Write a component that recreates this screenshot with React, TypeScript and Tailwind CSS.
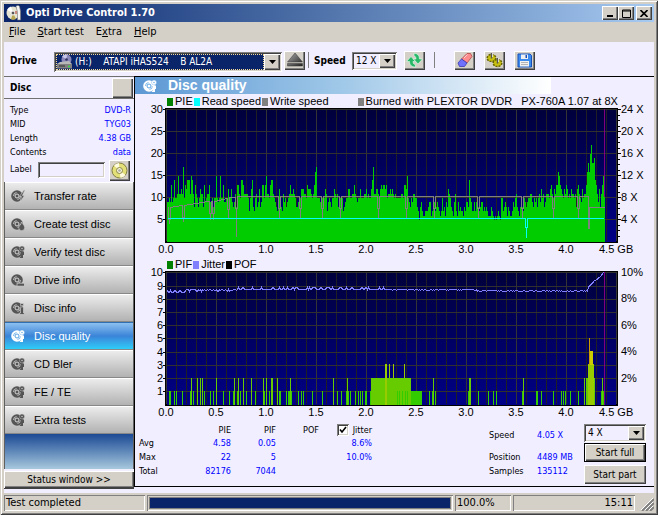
import type { ReactNode } from "react"
import clsx from "clsx"

const RAISED = "bg-[#d4d0c8] shadow-[inset_1px_1px_0_#fff,inset_-1px_-1px_0_#404040,inset_-2px_-2px_0_#808080]"
const SUNKEN = "shadow-[inset_1px_1px_0_#808080,inset_-1px_-1px_0_#fff,inset_2px_2px_0_#404040,inset_-2px_-2px_0_#d4d0c8]"
const PANEL = "shadow-[inset_1px_1px_0_#808080,inset_-1px_-1px_0_#fff]"

// one base-36 digit per column of the PIE scan
const PIE = [
  "99a9d9aeaabfbbcbhadceeebfeb8dba8acbb8d9abbd99a8aaf",
  "a9afaad99a8c8ac989b8ddbaeedbbbba7ace87ab89c89ddadf",
  "bbadeeba987ac987b9a89abdbbcba8898acccbbadcccbabdgh",
  "aaa98a9acb79a98aacbab89aaa789aaccaabbdba9aacaaabbc",
  "abaacehbbccbacdcddcdabbcbcbabaaaaabbaddcfa98a9bbaa",
  "8758976677789967897898767a78698cba8769b76978776879",
  "98ea977979a87899787876668765656765aa789868766798ab",
  "8768987a989aabb98a9a8ab9cab89bbbacdbacbddgfdcbacbd",
  "cabacbbab8cdba9cabbdgigkmiijedb9c8bdff",
].join("")

const PIF: Record<number, number[]> = {
  1: [2, 3, 7, 9, 15, 23, 26, 37, 43, 46, 56, 62, 66, 70, 73, 79, 88, 97, 102, 112, 113, 119, 121, 122, 124, 131, 134, 136, 145, 155, 170, 174, 179, 181, 183, 188, 191, 193, 195, 198, 199, 203, 262, 265, 268, 301, 311, 321, 326, 329, 355, 369, 370, 374, 386, 394, 396, 398, 403, 411, 434, 436],
  2: [24, 30, 33, 35, 49, 67, 71, 76, 84, 96, 99, 104, 105, 110, 123, 166, 180, 266, 302, 303, 356, 417, 419, 420, 427, 435],
  3: [218, 219, 222, 226, 237, 421, 426],
  4: [423, 424, 425],
  5: [422],
}

const PIF_FILL: Record<number, string> = { 1: "#33cc00", 2: "#66cc00", 3: "#99cc00", 4: "#cccc00", 5: "#cc9900" }

const X_LABELS = ["0.0", "0.5", "1.0", "1.5", "2.0", "2.5", "3.0", "3.5", "4.0"]

const WRITE_DIPS = [144, 165, 187, 205, 243, 271, 299, 343, 387, 418, 443]

function dip(x: number, top: number, bottom: number) {
  return ` H${x - 1} V${top + 12} H${x} V${bottom} V${top + 12} H${x + 1} V${top}`
}

function writePath() {
  let d = "M32 99" + dip(34, 99, 115) + " L46 97" + dip(48, 97, 113) + " L73 93" + dip(75, 93, 111)
  d += dip(78, 93, 111) + " L92 90" + dip(93, 89, 109) + dip(101, 88, 128)
  for (const x of WRITE_DIPS) d += dip(x, 88, 109)
  return d + " H453 V120 H454 V99 H469"
}

function jitterPath() {
  const ys = Array.from({ length: 437 }, (_, i) => {
    const n = Math.abs(Math.floor(Math.sin(i * 12.9898) * 43758.5453)) % 5
    if (i < 18) return n > 2 ? 21 : 19
    if (i < 70) return n > 3 ? 20 : n > 1 ? 19 : 18
    if (i < 118) return n === 0 ? 16 : 18
    if (i < 218) return i > 185 && i < 193 ? 18 : n > 2 ? 16 : 18
    if (i < 310) return n > 3 ? 19 : 18
    if (i < 421) return n > 2 ? 20 : 19
    return Math.max(1, Math.round(16 - (i - 420) * 0.95 + (n > 2 ? 1 : 0)))
  })
  return ys.map((y, i) => `${i ? "L" : "M"}${32 + i} ${y}`).join(" ")
}

interface PlotProps {
  id: string
  yLines: number[]
  yLabels: string[]
  right: { y: number; text: string }[]
  children: ReactNode
}

function Plot({ id, yLines, yLabels, right, children }: PlotProps) {
  return (
    <svg viewBox="0 0 519 148" className="block w-full overflow-visible font-['Liberation_Sans',Arial,sans-serif] text-[11px]" shapeRendering="crispEdges">
      <defs>
        <linearGradient id={id} x1="0" y1="0" x2="0" y2="1">
          <stop offset="0" stopColor="#00003c" />
          <stop offset="1" stopColor="#000088" />
        </linearGradient>
      </defs>
      <rect x="30" y="0" width="453" height="135" fill="#000" />
      <rect x="32" y="1" width="449" height="133" fill={`url(#${id})`} />
      {Array.from({ length: 46 }, (_, i) => (
        <rect key={i} x={31 + i * 10} y="1" width="1" height="132" fill={i % 5 ? "#202024" : "#343434"} />
      ))}
      {yLines.map((y) => (
        <g key={y}>
          <rect x="32" y={y} width="449" height="1" fill="#303030" />
          <rect x="28" y={y} width="3" height="1" fill="#000" />
        </g>
      ))}
      {children}
      {yLabels.map((t, i) => (
        <text key={t} x="28" y={yLines[i] + 4} textAnchor="end">{t}</text>
      ))}
      {X_LABELS.map((t, i) => (
        <text key={t} x={31 + i * 50} y="145" textAnchor="middle">{t}</text>
      ))}
      <text x="464" y="145">4.5 GB</text>
      {right.map((r) => (
        <text key={r.text} x="486" y={r.y + 4}>{r.text}</text>
      ))}
    </svg>
  )
}

function PieChart() {
  return (
    <Plot
      id="pie-bg"
      yLines={[1, 23, 45, 67, 89, 111]}
      yLabels={["30", "25", "20", "15", "10", "5"]}
      right={["24 X", "20 X", "16 X", "12 X", "8 X", "4 X"].map((text, i) => ({ text, y: 1 + i * 22 }))}
    >
      {PIE.split("").map((c, i) => {
        const h = Math.round(parseInt(c, 36) * 4.4)
        return <rect key={i} x={32 + i} y={134 - h} width="1" height={h} fill="#00cc00" />
      })}
      {Array.from({ length: 24 }, (_, i) => (
        <rect key={i} x="483" y={Math.round(1 + i * 5.5)} width={i % 4 ? 2 : 3} height="1" fill="#000" />
      ))}
      <g fill="none" transform="translate(.5 .5)">
        <path d={writePath()} stroke="#808080" />
        <path d="M32 110H390V119H391V129V119H392V110H468" stroke="#00ffff" />
      </g>
      <rect x="469" y="1" width="1" height="88" fill="#800080" />
    </Plot>
  )
}

function PifChart() {
  return (
    <Plot
      id="pif-bg"
      yLines={[1, 15, 28, 41, 54, 67, 81, 94, 107, 120]}
      yLabels={["10", "9", "8", "7", "6", "5", "4", "3", "2", "1"]}
      right={["10%", "8%", "6%", "4%", "2%"].map((text, i) => ({ text, y: 1 + Math.round(i * 26.4) }))}
    >
      <rect x="236" y="107" width="40" height="27" fill="#66cc00" />
      <rect x="276" y="120" width="11" height="14" fill="#33cc00" />
      <path d="M262.500 120v14M264.500 120v14M267.500 120v14M270.500 120v14M272.500 120v14" stroke="#33cc00" />
      {Object.entries(PIF).flatMap(([n, cols]) =>
        cols.map((c) => {
          const v = Number(n)
          const h = Math.round(v * 13.2) + 1
          const len = c > 219 && c < 240 ? 14 : h
          return <rect key={`${n}-${c}`} x={32 + c} y={134 - h} width="1" height={len} fill={PIF_FILL[v]} />
        })
      )}
      <rect x="453" y="94" width="6" height="40" fill="#99cc00" />
      <path d={jitterPath()} fill="none" stroke="#8080ff" transform="translate(.5 .5)" />
      <rect x="469" y="1" width="1" height="133" fill="#800080" />
    </Plot>
  )
}

function Legend({ items }: { items: { color: string; text: string; className?: string }[] }) {
  return (
    <div className="flex items-end gap-px pl-[32px] font-['Liberation_Sans',Arial,sans-serif] text-[11px] leading-[13px] whitespace-pre">
      {items.map((it) => (
        <span key={it.text} className={clsx("flex items-center gap-[2px]", it.className)}>
          <svg width="6" height="8"><rect width="6" height="8" fill={it.color} /></svg>
          {it.text}
        </span>
      ))}
    </div>
  )
}

type Mark = "bolt" | "flame" | "discs" | "drive" | "info"

function DiscIcon({ mark, color = "#555" }: { mark: Mark; color?: string }) {
  const hole = color === "#555" ? "#d8d8d8" : "#5aa4e4"
  return (
    <svg width="14" height="14" viewBox="0 0 14 14">
      <circle cx="6" cy="7" r="5.800" fill={color} />
      <path d="M2.500 7a3.500 3.500 0 0 1 3-3.500M9.500 7a3.500 3.500 0 0 1-3 3.500" fill="none" stroke={hole} strokeWidth=".8" />
      <circle cx="6" cy="7" r="2" fill="none" stroke={hole} strokeWidth="1" />
      {mark === "bolt" && <path d="M13 1 8.500 7.500h2L9 13l4.500-6.500h-2.200L14 1z" fill={color} stroke={hole} strokeWidth=".6" />}
      {mark === "flame" && <path d="M10.500 5c.5 2 3.200 3 3.200 5.500a3 3 0 0 1-6 .3C7.700 8.800 10 8 10.500 5z" fill={color} stroke={hole} strokeWidth=".6" />}
      {mark === "discs" && (
        <g>
          <circle cx="11" cy="3.500" r="2.500" fill={color} stroke={hole} strokeWidth=".4" />
          <circle cx="11" cy="3.500" r=".7" fill={hole} />
          <path d="M9.500 6.500h3.500V10h-1v3H8.500l1.500-2z" fill={color} />
        </g>
      )}
      {mark === "drive" && <path d="M6 10.200h7.500v3H6z" fill={color} stroke={hole} strokeWidth=".7" />}
      {mark === "info" && <path d="M9.500 2.500h3v2.200h-3zM9 6h3.500v6h1v1.500H8.500V12h1V7.500H9z" fill={color} stroke={hole} strokeWidth=".6" />}
    </svg>
  )
}

function GoldDisc() {
  return (
    <svg width="17" height="17" viewBox="0 0 17 17">
      <circle cx="8.500" cy="8.500" r="7.500" fill="#e4e078" stroke="#807c40" />
      <path d="M8.500 8.500 3 3.500A7.500 7.500 0 0 1 8 1zM8.500 8.500l6 4.500a7.500 7.500 0 0 1-5 3z" fill="#fffce0" />
      <circle cx="8.500" cy="8.500" r="3" fill="#f8f6d8" stroke="#8a8648" />
      <circle cx="8.500" cy="8.500" r="1.300" fill="#a8a8a0" />
    </svg>
  )
}

const NAV: { label: string; mark: Mark }[] = [
  { label: "Transfer rate", mark: "bolt" },
  { label: "Create test disc", mark: "flame" },
  { label: "Verify test disc", mark: "discs" },
  { label: "Drive info", mark: "drive" },
  { label: "Disc info", mark: "info" },
  { label: "Disc quality", mark: "discs" },
  { label: "CD Bler", mark: "discs" },
  { label: "FE / TE", mark: "discs" },
  { label: "Extra tests", mark: "discs" },
]

function ToolButton({ label, children }: { label: string; children: ReactNode }) {
  return (
    <button aria-label={label} className={clsx("flex h-[19px] w-[21px] items-center justify-center", RAISED)}>
      {children}
    </button>
  )
}

function Arrow() {
  return (
    <span className={clsx("pointer-events-none absolute top-[2px] right-[2px] bottom-[2px] flex w-4 items-center justify-center", RAISED)}>
      <svg width="7" height="4"><path d="M0 0h7L3.500 4z" fill="#000" /></svg>
    </span>
  )
}

function TitleBar() {
  return (
    <header className="flex h-[18px] items-center gap-1 bg-linear-to-r from-[#0a246a] to-[#a6caf0] px-[2px]">
      <svg width="16" height="16" viewBox="0 0 16 16">
        <circle cx="7" cy="8" r="6.500" fill="#e4e2d0" />
        <path d="M7 8 1 5a7 7 0 0 1 4-3.500z" fill="#fff" />
        <path d="m7 8 3 6a7 7 0 0 1-5 .3z" fill="#b8a850" />
        <circle cx="7" cy="8" r="2" fill="#555" stroke="#fff" />
        <path d="M10 1.500a2 2 0 0 1 3.500 0L14.500 6v9h-3V7z" fill="#f4f4f4" stroke="#777" strokeWidth=".6" />
        <path d="M10 6v3" stroke="#b03020" />
      </svg>
      <h1 className="flex-1 text-[11px] font-bold text-white">Opti Drive Control 1.70</h1>
      <div className="flex">
        <button aria-label="Minimize" className={clsx("flex h-[14px] w-4 items-end justify-center pb-[3px]", RAISED)}>
          <svg width="6" height="2"><rect width="6" height="2" /></svg>
        </button>
        <button aria-label="Maximize" className={clsx("flex h-[14px] w-4 items-center justify-center", RAISED)}>
          <svg width="9" height="9"><path d="M.5 1h8M.5 1v7.500h8V1M.5 2h8" fill="none" stroke="#000" /></svg>
        </button>
        <button aria-label="Close" className={clsx("ml-[2px] flex h-[14px] w-4 items-center justify-center", RAISED)}>
          <svg width="8" height="7"><path d="m.5 0 7 7m0-7-7 7" stroke="#000" strokeWidth="1.600" /></svg>
        </button>
      </div>
    </header>
  )
}

function Toolbar() {
  return (
    <div className="flex h-[34px] items-center pt-[2px] pl-[6px]">
      <label htmlFor="drive" className="w-11 text-[10px] font-bold">Drive</label>
      <div className={clsx("relative mt-1 h-[20px] w-[228px] bg-[#f0eeff] p-[2px]", SUNKEN)}>
        <select id="drive" className="block h-full w-[208px] appearance-none border border-dotted border-[#f5db95] bg-[#0a246a] pl-[18px] text-[10px] leading-none whitespace-pre text-white">
          <option>{"(H:)\u00a0\u00a0\u00a0\u00a0ATAPI iHAS524\u00a0\u00a0\u00a0\u00a0B AL2A"}</option>
        </select>
        <svg className="pointer-events-none absolute top-[2px] left-[3px]" width="16" height="16" viewBox="0 0 16 16">
          <circle cx="9.500" cy="5.500" r="5" fill="#8a88b8" />
          <path d="M9.500 5.500 5 2.500A5 5 0 0 1 10 .5z" fill="#c8c6e8" />
          <circle cx="9.500" cy="5.500" r="1.300" fill="#303060" />
          <path d="m3 8 9-1 3 3H0z" fill="#b8b8b8" />
          <path d="M0 10h15v4.500H0z" fill="#808080" />
          <path d="M2 12h6" stroke="#333" />
          <path d="M11 12.500h2" stroke="#30e040" strokeWidth="1.500" />
        </svg>
        <Arrow />
      </div>
      <div className="ml-[2px] flex items-center gap-[3px]">
        <ToolButton label="Eject">
          <svg width="16" height="14" viewBox="0 0 16 14">
            <defs>
              <linearGradient id="eject" x2="1" y2="1">
                <stop stopColor="#aaa" /><stop offset="1" stopColor="#222" />
              </linearGradient>
            </defs>
            <path d="M8 0 15.500 9H.5zM.5 10.500h15V13H.5z" fill="url(#eject)" stroke="#333" strokeWidth=".5" />
          </svg>
        </ToolButton>
        <span className="h-4 w-px bg-[#808080]" />
      </div>
      <label htmlFor="speed" className="ml-[5px] w-[38px] text-[10px] font-bold">Speed</label>
      <div className={clsx("relative mt-[2px] h-[18px] w-[45px] bg-[#f0eeff] p-[2px]", SUNKEN)}>
        <select id="speed" className="block h-full w-full appearance-none pl-[2px] text-[10px] leading-none">
          <option>12 X</option>
        </select>
        <Arrow />
      </div>
      <div className="ml-[7px] flex items-center gap-[9px]">
        <ToolButton label="Refresh">
          <svg width="17" height="16" viewBox="0 0 17 16" fill="#28b868" stroke="#e8fff0" strokeWidth=".6">
            <path d="M5 4.500 9.500 9.500H7c0 1.800.8 2.800 2.500 3.300V15C5.500 15 3.500 13 3.500 9.500H.5z" />
            <path d="M12 12 7.500 7H10c0-1.800-.8-2.800-2-3.300V1.300C11.500 1.300 13.500 3.500 13.500 7h3z" />
          </svg>
        </ToolButton>
        <span className="h-4 w-px bg-[#808080]" />
        <span className="w-px" />
        <ToolButton label="Erase">
          <svg width="16" height="16" viewBox="0 0 16 16">
            <path d="M10 1.500 13.500 1.500 15 4.500 10 11 4.500 7z" fill="#ff8c8c" stroke="#b04848" strokeWidth=".8" />
            <path d="m4.500 7 5.500 4-2.500 3.500-5 0L1 11z" fill="#7070ff" stroke="#3838b0" strokeWidth=".8" />
            <path d="m7 6 3.500-3.500" stroke="#ffd0d0" />
          </svg>
        </ToolButton>
        <ToolButton label="Options">
          <svg width="17" height="16" viewBox="0 0 17 16">
            <g fill="#c8c010" stroke="#686400" strokeWidth="1.500" strokeDasharray="2 1">
              <ellipse cx="5.500" cy="6" rx="4.300" ry="3.500" />
              <ellipse cx="11.500" cy="11" rx="4.300" ry="3.500" />
            </g>
            <path d="M5.500 1v5.500M11.500 6v5.500" stroke="#555" strokeWidth="1.500" />
            <path d="M6.500 1v4M12.500 6v4" stroke="#eee" strokeWidth=".8" />
          </svg>
        </ToolButton>
        <ToolButton label="Save">
          <svg width="15" height="15" viewBox="0 0 15 15">
            <path d="M1 1h12l1.500 1.500V14H1z" fill="#3c8cf0" stroke="#1850b8" />
            <path d="M4 1.500h7v4.500H4zM3 8h9v5.500H3z" fill="#f0f0f0" />
            <path d="M8.500 2h1.500v3H8.500z" fill="#1850b8" />
            <path d="M4 9.500h7M4 11.500h7" stroke="#999" strokeWidth=".7" />
          </svg>
        </ToolButton>
      </div>
    </div>
  )
}

function Sidebar() {
  const info = [
    ["Type", "DVD-R"],
    ["MID", "TYG03"],
    ["Length", "4.38 GB"],
    ["Contents", "data"],
  ]
  return (
    <aside className="flex w-[130px] shrink-0 flex-col">
      <div className="flex h-[23px] items-center justify-between border-y border-[#707070] pl-[6px]">
        <h2 className="text-[10px] font-bold">Disc</h2>
        <button aria-label="Disc details" className={clsx("mr-px h-5 w-[21px]", RAISED)} />
      </div>
      <dl className="flex flex-col pt-1 pr-[3px] pl-[6px] text-[9px] leading-[14px]">
        {info.map(([k, v]) => (
          <div key={k} className="flex justify-between">
            <dt>{k}</dt>
            <dd className="text-[#0000ff]">{v}</dd>
          </div>
        ))}
      </dl>
      <div className="flex h-[22px] items-center pl-[6px]">
        <label htmlFor="label" className="w-7 text-[9px]">Label</label>
        <input id="label" className={clsx("h-4 w-[67px]", SUNKEN)} />
        <button aria-label="Read label" className={clsx("ml-1 flex h-[21px] w-[21px] items-center justify-center", RAISED)}>
          <GoldDisc />
        </button>
      </div>
      <div className="mt-px flex flex-1 flex-col border-x border-[#606060]">
        {NAV.map(({ label, mark }) => {
          const active = label === "Disc quality"
          return (
            <button
              key={label}
              className={clsx(
                "flex h-7 items-center gap-[9px] border-t border-b border-b-[#888] pl-[6px] font-['Liberation_Sans',Arial,sans-serif] text-[11px]",
                active
                  ? "border-t-[#3070b0] bg-linear-to-b from-[#8cc0f0] via-[#3a84d8] to-[#2ccdf8] text-white"
                  : "border-t-white bg-linear-to-b from-[#ececec] to-[#b2b2b2]"
              )}
            >
              <DiscIcon mark={mark} color={active ? "#fff" : "#555"} />
              {label}
            </button>
          )
        })}
        <div className="min-h-[34px] flex-1 bg-linear-to-b from-[#1c4a94] to-[#a8c8dc]" />
      </div>
      <button className={clsx("mt-[2px] h-[17px] w-full text-[10px] leading-none", RAISED)}>Status window &gt;&gt;</button>
      <div className="h-px bg-[#404040]" />
    </aside>
  )
}

function Results() {
  return (
    <div className="flex flex-1 items-start justify-between pt-[5px] pr-[8px] pl-1">
      <table className="text-right text-[9px] leading-[14px]">
        <thead>
          <tr className="leading-[12px]">
            <td className="w-[46px]" />
            <th scope="col" className="w-[46px] font-normal">PIE</th>
            <th scope="col" className="w-[45px] font-normal">PIF</th>
            <th scope="col" className="w-[43px] font-normal">POF</th>
            <th scope="col" className="w-[53px] font-normal">
              <label className="flex items-center justify-end gap-1">
                <span className="relative flex">
                  <input type="checkbox" defaultChecked className={clsx("size-3 appearance-none bg-white", SUNKEN)} />
                  <svg className="pointer-events-none absolute top-[2px] left-[2px]" width="8" height="8">
                    <path d="m1 3.500 2 2.500 4-5" fill="none" stroke="#000" strokeWidth="1.600" />
                  </svg>
                </span>
                Jitter
              </label>
            </th>
          </tr>
        </thead>
        <tbody className="text-[#0000ff]">
          <tr><th scope="row" className="text-left font-normal text-black">Avg</th><td>4.58</td><td>0.05</td><td /><td>8.6%</td></tr>
          <tr><th scope="row" className="text-left font-normal text-black">Max</th><td>22</td><td>5</td><td /><td>10.0%</td></tr>
          <tr><th scope="row" className="text-left font-normal text-black">Total</th><td>82176</td><td>7044</td><td /><td /></tr>
        </tbody>
      </table>
      <div className="flex">
        <dl className="grid grid-cols-[48px_47px] content-start text-[9px] leading-[14px]">
          <dt className="pt-1 pb-2">Speed</dt><dd className="pt-1 pb-2 text-[#0000ff]">4.05 X</dd>
          <dt>Position</dt><dd className="text-[#0000ff]">4489 MB</dd>
          <dt>Samples</dt><dd className="text-[#0000ff]">135112</dd>
        </dl>
        <div className="flex w-[62px] flex-col text-[10px]">
          <div className={clsx("relative h-[18px] p-[2px]", SUNKEN)}>
            <select aria-label="Test speed" className="block h-full w-full appearance-none pl-[2px] leading-none">
              <option>4 X</option>
            </select>
            <Arrow />
          </div>
          <button className={clsx("mt-px h-[19px] border border-black leading-none", RAISED)}>Start full</button>
          <button className={clsx("mt-[3px] h-[19px] leading-none", RAISED)}>Start part</button>
        </div>
      </div>
    </div>
  )
}

function StatusBar() {
  return (
    <footer className="flex h-[18px] items-stretch gap-[2px] bg-[#d4d0c8] pt-[2px] text-[11px] leading-[16px]">
      <div className={clsx("w-[141px] pl-[2px]", PANEL)}>Test completed</div>
      <div className={clsx("flex-1 p-[2px]", PANEL)}>
        <div role="progressbar" aria-valuenow={100} className="h-full border border-white bg-[#0a246a] outline outline-[#808080] -outline-offset-1" />
      </div>
      <div className={clsx("w-[56px] pl-[2px]", PANEL)}>100.0%</div>
      <div className={clsx("w-[122px] pr-[2px] text-right", PANEL)}>15:11</div>
      <svg className="ml-1 self-end" width="13" height="13">
        <path d="M1 13 13 1M5 13l8-8M9 13l4-4" stroke="#808080" strokeWidth="2" />
        <path d="M0 12 12 0M4 12l8-8M8 12l4-4" stroke="#fff" />
      </svg>
    </footer>
  )
}

export default function App() {
  return (
    <div className="flex min-h-screen flex-col bg-[#d4d0c8] p-1 font-['DejaVu_Sans_Condensed','DejaVu_Sans',sans-serif] text-black shadow-[inset_1px_1px_0_#d4d0c8,inset_-1px_-1px_0_#404040,inset_2px_2px_0_#fff,inset_-2px_-2px_0_#808080]">
      <TitleBar />
      <nav className="flex h-5 items-center gap-3 pl-[5px] text-[11px]">
        <button><u>F</u>ile</button>
        <button><u>S</u>tart test</button>
        <button>E<u>x</u>tra</button>
        <button><u>H</u>elp</button>
      </nav>
      <div className="flex flex-1 flex-col bg-[#f0eeff]">
        <Toolbar />
        <div className="flex flex-1 pb-1">
          <Sidebar />
          <main className="mb-[2px] flex min-w-0 flex-1 flex-col border-t border-b border-l border-black">
            <h2 className="mr-[103px] flex h-[17px] items-center gap-[11px] bg-linear-to-r from-[#5c98d4] via-[#a0c8e8] to-white pl-2 font-['Liberation_Sans',Arial,sans-serif] text-[14px] font-bold text-white">
              <DiscIcon mark="discs" color="#fff" />
              Disc quality
            </h2>
            <div className="flex h-[14px] items-end">
              <Legend
                items={[
                  { color: "#008000", text: "PIE" },
                  { color: "#00ffff", text: "Read speed" },
                  { color: "#808080", text: "Write speed" },
                  { color: "#808080", text: "Burned with PLEXTOR DVDR   PX-760A 1.07 at 8X", className: "ml-7" },
                ]}
              />
            </div>
            <PieChart />
            <div className="flex h-[15px] items-end">
              <Legend
                items={[
                  { color: "#008000", text: "PIF" },
                  { color: "#8080ff", text: "Jitter" },
                  { color: "#000000", text: "POF" },
                ]}
              />
            </div>
            <PifChart />
            <Results />
          </main>
        </div>
      </div>
      <StatusBar />
    </div>
  )
}
